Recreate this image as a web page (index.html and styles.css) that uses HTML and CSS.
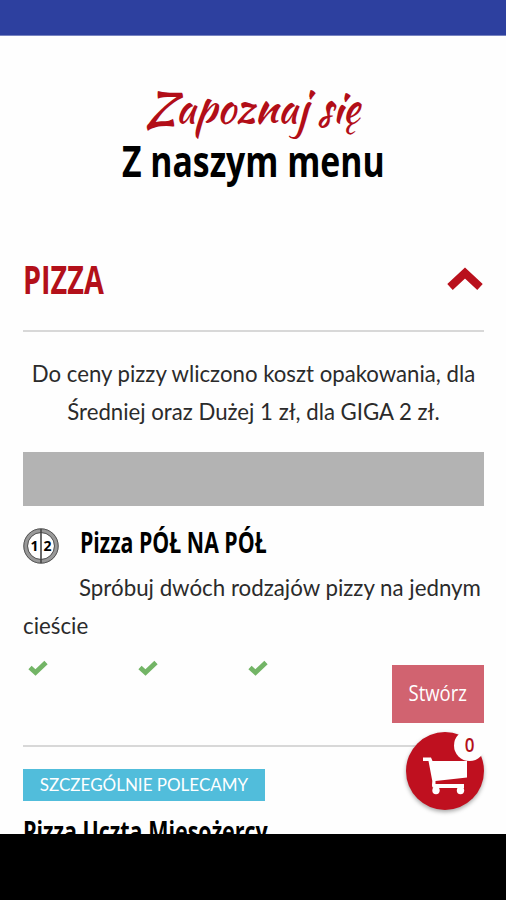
FILE: index.html
```
<!DOCTYPE html>
<html lang="pl">
<head>
    <meta charset="UTF-8">
    <meta name="viewport" content="width=device-width, initial-scale=1.0">
    <title>Menu - Pizza</title>
    <link rel="stylesheet" href="styles.css">
</head>
<body>
    <div class="status-bar"></div>

    <main class="page">
        <header class="intro">
            <p class="intro-script"><span>Zapoznaj się</span></p>
            <h1 class="intro-title"><span>Z naszym menu</span></h1>
        </header>

        <div class="category">
            <h2 class="category-name">PIZZA</h2>
            <svg class="chevron" viewBox="0 0 36 24"><path d="M3 20 L18 6 L33 20" fill="none" stroke="#b9101c" stroke-width="8"/></svg>
        </div>

        <p class="note">Do ceny pizzy wliczono koszt opakowania, dla Średniej oraz Dużej 1 zł, dla GIGA 2 zł.</p>

        <div class="sizes"></div>

        <section class="item">
            <div class="item-head">
                <svg class="half-icon" viewBox="0 0 36 36">
                    <circle cx="18" cy="18" r="15.300" fill="#fff" stroke="#999" stroke-width="4.600"/>
                    <circle cx="18" cy="18" r="17.200" fill="none" stroke="#555" stroke-width="1"/>
                    <circle cx="18" cy="18" r="13.500" fill="none" stroke="#555" stroke-width="1"/>
                    <path d="M18 1v34" stroke="#444" stroke-width="1.600"/>
                    <text x="7.500" y="23">1</text>
                    <text x="20.500" y="23">2</text>
                </svg>
                <h3 class="item-name half-name">Pizza PÓŁ NA PÓŁ</h3>
            </div>
            <p class="item-text">Spróbuj dwóch rodzajów pizzy na jednym cieście</p>
            <div class="item-foot">
                <div class="checks">
                    <svg viewBox="0 0 20 16"><path d="M2 7.500 L7.500 12.500 L18 2.500" fill="none" stroke="#73b566" stroke-width="4.800"/></svg>
                    <svg viewBox="0 0 20 16"><path d="M2 7.500 L7.500 12.500 L18 2.500" fill="none" stroke="#73b566" stroke-width="4.800"/></svg>
                    <svg viewBox="0 0 20 16"><path d="M2 7.500 L7.500 12.500 L18 2.500" fill="none" stroke="#73b566" stroke-width="4.800"/></svg>
                </div>
                <button class="btn"><span>Stwórz</span></button>
            </div>
        </section>

        <section class="item-next">
            <div class="badge">SZCZEGÓLNIE POLECAMY</div>
            <h3 class="item-name next-name">Pizza Uczta Mięsożercy</h3>
        </section>
    </main>

    <div class="cart">
        <svg class="cart-icon" viewBox="0 0 46 40" fill="#fff">
            <path d="M1 2.500 H9 L10.500 6 H45 V22.500 L13.500 26 V29 H42 V33 H12 Q10 33 10 30 L10.300 26 L6.500 6 H1 Z"/>
            <circle cx="14" cy="35.500" r="3.700"/>
            <circle cx="38.500" cy="35.500" r="3.700"/>
        </svg>
        <div class="cart-count"><span>0</span></div>
    </div>

    <div class="nav-bar"></div>
</body>
</html>
```
FILE: styles.css
```
* { margin: 0; padding: 0; box-sizing: border-box; }
body {
    font-family: Lato, "Liberation Sans", sans-serif;
    background: #fefefe;
    color: #2b2b2b;
    height: 900px;
    display: flex;
    flex-direction: column;
    overflow: hidden;
    position: relative;
}
.status-bar {
    height: 36px;
    background: #2d409f;
    border-bottom: 1px solid #7783c0;
    flex: none;
}
.nav-bar {
    height: 66px;
    background: #000;
    flex: none;
}
.page {
    height: 798px;
    flex: none;
    padding: 0 22px 0 23px;
    overflow: hidden;
}

/* naglowek */
.intro {
    height: 194px;
    padding-top: 46px;
    text-align: center;
}
.intro span { display: inline-block; white-space: nowrap; }
.intro-script {
    height: 56px;
    font-family: "Kaushan Script", "Liberation Serif", serif;
    font-size: 43px;
    line-height: 52px;
    color: #b20e18;
}
.intro-script span { transform: scaleX(0.985); }
.intro-title {
    font-family: "Open Sans", sans-serif;
    font-size: 43px;
    line-height: 46px;
    color: #000;
}
.intro-title span { transform: scaleX(0.785); }

/* kategoria */
.category {
    height: 102px;
    padding: 23px 1px 25px 0;
    display: flex;
    align-items: center;
    justify-content: space-between;
    border-bottom: 2px solid #d8d8d8;
}
.category-name {
    font-family: "Open Sans", sans-serif;
    font-size: 40px;
    line-height: 50px;
    color: #b3101a;
    transform: scaleX(0.72);
    transform-origin: left;
}
.chevron { width: 36px; height: 24px; }

.note {
    padding-top: 23px;
    font-size: 22.2px;
    line-height: 38px;
    text-align: center;
}
.sizes {
    height: 54px;
    margin-top: 21px;
    background: #b3b3b3;
}

/* pozycja menu */
.item {
    height: 241px;
    padding-top: 17px;
    border-bottom: 2px solid #d8d8d8;
}
.item-head {
    height: 46px;
    display: flex;
    gap: 21px;
}
.half-icon {
    width: 36px;
    height: 36px;
    margin-top: 5px;
    font-family: "Open Sans", sans-serif;
    font-size: 14px;
    font-weight: bold;
}
.item-name {
    font-family: "Open Sans", sans-serif;
    font-size: 28px;
    font-weight: 700;
    line-height: 40px;
    color: #000;
    white-space: nowrap;
    transform-origin: left;
}
.half-name { line-height: 38px; transform: scaleX(0.76); }
.item-text {
    font-size: 22.3px;
    line-height: 38px;
    text-indent: 56px;
}
.item-foot {
    display: flex;
    justify-content: space-between;
}
.checks {
    display: flex;
    gap: 90px;
    padding: 15px 0 0 5px;
}
.checks svg { width: 20px; height: 16px; }
.btn {
    width: 92px;
    height: 58px;
    margin-top: 20px;
    padding-bottom: 4px;
    border: none;
    background: #d16370;
    color: #fff;
    font-family: "Open Sans", sans-serif;
    font-size: 22px;
    cursor: pointer;
}
.btn span { display: inline-block; transform: scaleX(0.84); }

.item-next { padding-top: 22px; }
.badge {
    width: 242px;
    height: 32px;
    background: #51bddb;
    color: #fff;
    font-size: 17px;
    line-height: 32px;
    text-align: center;
    white-space: nowrap;
}
.next-name { margin-top: 10px; transform: scaleX(0.767); }

/* koszyk */
.cart {
    position: absolute;
    left: 406px;
    top: 732px;
    width: 78px;
    height: 78px;
    border-radius: 50%;
    background: #bf101f;
    box-shadow: 0 2px 4px rgba(0,0,0,0.35);
}
.cart-icon {
    position: absolute;
    left: 16px;
    top: 23px;
    width: 46px;
    height: 40px;
}
.cart-count {
    position: absolute;
    left: 48px;
    top: -2px;
    width: 31px;
    height: 31px;
    border-radius: 50%;
    background: #fefefe;
    color: #b3101a;
    font-family: "Open Sans", sans-serif;
    font-size: 20px;
    font-weight: 600;
    line-height: 30px;
    text-align: center;
}
.cart-count span { display: inline-block; transform: scaleX(0.85); }
```
